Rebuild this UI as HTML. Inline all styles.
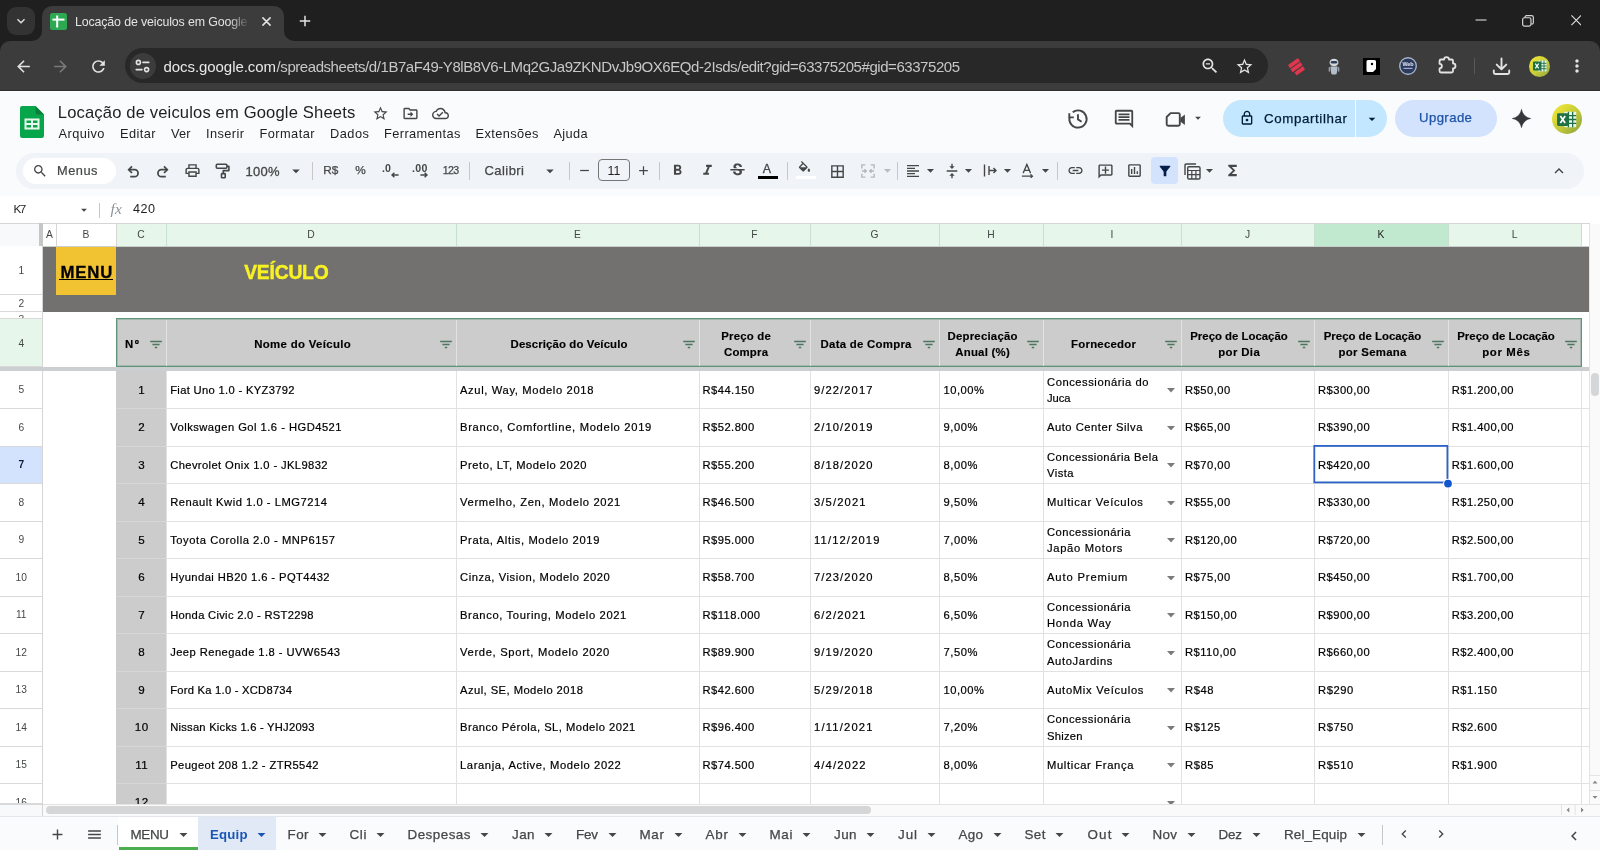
<!DOCTYPE html>
<html lang="pt-BR"><head><meta charset="utf-8"><title>Locação de veiculos em Google Sheets</title>
<style>
*{box-sizing:border-box;margin:0;padding:0}
html,body{width:1600px;height:850px;overflow:hidden;background:#fff;font-family:"Liberation Sans",sans-serif;color:#1f1f1f}
body{opacity:0.9999}
.a{position:absolute}
.t{position:absolute;white-space:nowrap;line-height:1}
</style></head><body>
<div class="a" style="left:0;top:0;width:1600px;height:91px;background:#1f1f1f"></div><div class="a" style="left:0;top:41px;width:1600px;height:49px;background:#3c3c3c;border-radius:10px 10px 0 0"></div><div class="a" style="left:0;top:89.6px;width:1600px;height:1.4px;background:#2c2c2c"></div><div class="a" style="left:0;top:91px;width:1600px;height:1.2px;background:#fff"></div><div class="a" style="left:7px;top:7px;width:28px;height:28px;border-radius:9px;background:#333"></div><svg class="a" style="left:13px;top:13px" width="16" height="16" viewBox="0 0 24 24" fill="#e3e3e3"><path d="M16.59 8.59L12 13.17 7.41 8.59 6 10l6 6 6-6z"/></svg><div class="a" style="left:42px;top:6px;width:242px;height:36px;background:#3c3c3c;border-radius:10px 10px 0 0"></div><svg class="a" style="left:32px;top:31px" width="10" height="10"><path d="M10 0V10H0A10 10 0 0 0 10 0Z" fill="#3c3c3c"/></svg><svg class="a" style="left:284px;top:31px" width="10" height="10"><path d="M0 0V10H10A10 10 0 0 1 0 0Z" fill="#3c3c3c"/></svg><svg class="a" style="left:50px;top:13px" width="17" height="17" viewBox="0 0 17 17"><rect width="17" height="17" rx="2.5" fill="#2da853"/><rect x="6.2" y="2.5" width="2" height="12" fill="#fff"/><rect x="2.5" y="5.6" width="12" height="2" fill="#fff"/></svg><div class="t" style="top:14px;line-height:16px;font-size:12.4px;color:#e3e3e3;letter-spacing:-0.140px;left:75px;width:175px;height:16px;overflow:hidden;-webkit-mask-image:linear-gradient(90deg,#000 88%,transparent);">Locação de veiculos em Google Sheets</div><svg class="a" style="left:261.5px;top:16.5px" width="9" height="9" viewBox="0 0 9 9" stroke="#e3e3e3" stroke-width="1.55" stroke-linecap="round"><path d="M0.9 0.9L8.1 8.1M8.1 0.9L0.9 8.1"/></svg><svg class="a" style="left:296px;top:12px" width="18" height="18" viewBox="0 0 24 24" fill="#e3e3e3"><path d="M19 13h-6v6h-2v-6H5v-2h6V5h2v6h6v2z"/></svg><svg class="a" style="left:1474px;top:17px" width="14" height="6"><rect x="1.5" y="2.4" width="11" height="1.2" fill="#c8c8c8"/></svg><svg class="a" style="left:1522px;top:14.8px" width="12" height="12" viewBox="0 0 13 13" fill="none" stroke="#d4d4d4" stroke-width="1.3"><rect x="0.7" y="3" width="9" height="9" rx="2"/><path d="M3.2 3V2.5Q3.2 0.7 5 0.7H10.3Q12.3 0.7 12.3 2.7V8Q12.3 9.8 10.5 9.8H10"/></svg><svg class="a" style="left:1570.8px;top:15.3px" width="10.5" height="10.5" viewBox="0 0 12 12" stroke="#dcdcdc" stroke-width="1.35"><path d="M0.5 0.5L11.5 11.5M11.5 0.5L0.5 11.5"/></svg><svg class="a" style="left:13.5px;top:56.5px" width="19" height="19" viewBox="0 0 24 24" fill="#e3e3e3"><path d="M20 11H7.83l5.59-5.59L12 4l-8 8 8 8 1.41-1.41L7.83 13H20v-2z"/></svg><svg class="a" style="left:50.5px;top:56.5px" width="19" height="19" viewBox="0 0 24 24" fill="#7a7a7a"><path d="M12 4l-1.41 1.41L16.17 11H4v2h12.17l-5.58 5.59L12 20l8-8z"/></svg><svg class="a" style="left:88.5px;top:56.5px" width="19" height="19" viewBox="0 0 24 24" fill="#e3e3e3"><path d="M17.65 6.35C16.2 4.9 14.21 4 12 4c-4.42 0-7.99 3.58-7.99 8s3.57 8 7.99 8c3.73 0 6.84-2.55 7.73-6h-2.08c-.82 2.33-3.04 4-5.65 4-3.31 0-6-2.69-6-6s2.69-6 6-6c1.66 0 3.14.69 4.22 1.78L13 11h7V4l-2.35 2.35z"/></svg><div class="a" style="left:125px;top:48px;width:1143px;height:35px;border-radius:18px;background:#282828"></div><div class="a" style="left:129.5px;top:52.7px;width:26px;height:26px;border-radius:13px;background:#3c3c3c"></div><svg class="a" style="left:135px;top:59px" width="15" height="14" viewBox="0 0 15 14" fill="none" stroke="#e3e3e3" stroke-width="1.6" stroke-linecap="round"><circle cx="3.4" cy="3.4" r="2"/><path d="M8 3.4H13.8"/><circle cx="11.6" cy="10.6" r="2"/><path d="M1.2 10.6H7"/></svg><div class="t" style="top:57px;line-height:19px;font-size:15px;color:#e8e8e8;letter-spacing:-0.064px;left:163.5px;">docs.google.com</div><div class="t" style="top:57px;line-height:19px;font-size:15px;color:#c7c7c7;letter-spacing:-0.439px;left:276.6px;">/spreadsheets/d/1B7aF49-Y8lB8V6-LMq2GJa9ZKNDvJb9OX6EQd-2Isds/edit?gid=63375205#gid=63375205</div><svg class="a" style="left:1200px;top:56px" width="20" height="20" viewBox="0 0 24 24" fill="#e3e3e3"><path d="M15.5 14h-.79l-.28-.27C15.41 12.59 16 11.11 16 9.5 16 5.91 13.09 3 9.5 3S3 5.91 3 9.5 5.91 16 9.5 16c1.61 0 3.09-.59 4.23-1.57l.27.28v.79l5 4.99L20.49 19l-4.99-5zm-6 0C7.01 14 5 11.99 5 9.5S7.01 5 9.5 5 14 7.01 14 9.5 11.99 14 9.5 14zM7 8.75h5v1.5H7z"/></svg><svg class="a" style="left:1234.5px;top:56.5px" width="19" height="19" viewBox="0 0 24 24" fill="#e3e3e3"><path d="M22 9.24l-7.19-.62L12 2 9.19 8.63 2 9.24l5.46 4.73L5.82 21 12 17.27 18.18 21l-1.63-7.03L22 9.24zM12 15.4l-3.76 2.27 1-4.28-3.32-2.88 4.38-.38L12 6.1l1.71 4.04 4.38.38-3.32 2.88 1 4.28L12 15.4z"/></svg><svg class="a" style="left:1286px;top:57px" width="20" height="19" viewBox="0 0 20 19" fill="#e0364e"><path d="M2 8L12 1l2 3.2L4 11.2zM4.5 12L14.5 5l2 3.2L6.5 15.2zM8.5 15.2L17 9.3l2 3.2L10.5 18.4z"/></svg><svg class="a" style="left:1328px;top:57.5px" width="12" height="17" viewBox="0 0 15 21"><ellipse cx="7.5" cy="5.5" rx="5.5" ry="4.8" fill="#d5d9de"/><rect x="3.5" y="3.6" width="8" height="3.2" rx="1.6" fill="#2b3e57"/><path d="M3 10.5h9l-1 8.5a2 2 0 0 1-2 1.6H6a2 2 0 0 1-2-1.6z" fill="#b4bec8"/><rect x="0.8" y="11" width="2" height="6" rx="1" fill="#8f9ba6"/><rect x="12.2" y="11" width="2" height="6" rx="1" fill="#8f9ba6"/></svg><div class="a" style="left:1362.5px;top:57.5px;width:17px;height:17px;background:#000"></div><svg class="a" style="left:1366px;top:60px" width="10" height="12" viewBox="0 0 10 12"><path d="M2 0h6.5a1.5 1.5 0 0 1 1.5 1.5V9L7 12H2a1.5 1.5 0 0 1-1.5-1.5v-9A1.5 1.5 0 0 1 2 0z" fill="#fff"/><circle cx="6" cy="4" r="1.2" fill="#000"/></svg><svg class="a" style="left:1399px;top:57px" width="18" height="18" viewBox="0 0 20 20"><circle cx="10" cy="10" r="9.2" fill="#2d3a5c" stroke="#a9b6d0" stroke-width="1.5"/><text x="10" y="10.5" text-anchor="middle" font-family="Liberation Sans,sans-serif" font-weight="bold" font-size="6" fill="#dfe8fa">Web</text><rect x="5" y="12" width="10" height="1.3" fill="#9fb3d9"/></svg><svg class="a" style="left:1437px;top:54.2px" width="20" height="20" viewBox="0 0 21 21" fill="none" stroke="#e3e3e3" stroke-width="1.9" stroke-linejoin="round"><path d="M4.2 5.8H7.4A2.6 2.6 0 0 1 12.6 5.8H15.3Q16.8 5.8 16.8 7.3V9.9A2.6 2.6 0 0 1 16.8 15.1V17.9Q16.8 19.4 15.3 19.4H4.2Q2.7 19.4 2.7 17.9V15.1A2.4 2.4 0 0 0 2.7 10.3V7.3Q2.7 5.8 4.2 5.8Z"/></svg><div class="a" style="left:1473.5px;top:58px;width:1.5px;height:16px;background:#5a5a5a"></div><svg class="a" style="left:1492px;top:57px" width="19" height="19" viewBox="0 0 19 19" fill="none" stroke="#e3e3e3" stroke-width="1.9" stroke-linecap="round" stroke-linejoin="round"><path d="M9.5 1.5V12M4.7 7.6L9.5 12.3L14.3 7.6M1.8 13.5V15.5Q1.8 17 3.3 17H15.7Q17.2 17 17.2 15.5V13.5"/></svg><div class="a" style="left:1529px;top:55.5px;width:21px;height:21px;border-radius:11px;background:linear-gradient(135deg,#e6e038 20%,#c8cc38 55%,#94aa3c 95%)"></div><svg class="a" style="left:1533px;top:60px" width="14" height="12" viewBox="0 0 14 12"><rect x="5" y="0.5" width="8.5" height="11" rx="0.8" fill="#e9f5ec"/><path d="M8 0.5V11.5M11 0.5V11.5M5 3.3H13.5M5 6H13.5M5 8.7H13.5" stroke="#1e7145" stroke-width="0.9"/><rect x="0" y="1.5" width="8" height="9" rx="0.8" fill="#1e7145"/><path d="M2.3 3.6L5.7 8.4M5.7 3.6L2.3 8.4" stroke="#fff" stroke-width="1.2"/></svg><svg class="a" style="left:1567px;top:56px" width="20" height="20" viewBox="0 0 24 24" fill="#e3e3e3"><path d="M12 8c1.1 0 2-.9 2-2s-.9-2-2-2-2 .9-2 2 .9 2 2 2zm0 2c-1.1 0-2 .9-2 2s.9 2 2 2 2-.9 2-2-.9-2-2-2zm0 6c-1.1 0-2 .9-2 2s.9 2 2 2 2-.9 2-2-.9-2-2-2z"/></svg><div class="a" style="left:0;top:92px;width:1600px;height:104.5px;background:#f9fbfd"></div><svg class="a" style="left:20px;top:106px" width="24" height="32" viewBox="0 0 24 32"><path d="M2.2 0H15.5L24 8.5V29.8A2.2 2.2 0 0 1 21.8 32H2.2A2.2 2.2 0 0 1 0 29.8V2.2A2.2 2.2 0 0 1 2.2 0Z" fill="#08a64b"/><path d="M15.5 0L24 8.5H17.7A2.2 2.2 0 0 1 15.5 6.3Z" fill="#0a7f3c"/><path d="M4.5 12.6V23.6H19.5V12.6ZM11 21.6H6.5V19.1H11ZM11 17.1H6.5V14.6H11ZM17.5 21.6H13V19.1H17.5ZM17.5 17.1H13V14.6H17.5Z" fill="#eaf6ee"/></svg><div class="t" style="top:102px;line-height:21px;font-size:16.6px;color:#1f1f1f;letter-spacing:0.142px;left:57.8px;">Locação de veiculos em Google Sheets</div><svg class="a" style="left:371.5px;top:104.5px" width="17" height="17" viewBox="0 0 24 24" fill="#444746"><path d="M22 9.24l-7.19-.62L12 2 9.19 8.63 2 9.24l5.46 4.73L5.82 21 12 17.27 18.18 21l-1.63-7.03L22 9.24zM12 15.4l-3.76 2.27 1-4.28-3.32-2.88 4.38-.38L12 6.1l1.71 4.04 4.38.38-3.32 2.88 1 4.28L12 15.4z"/></svg><svg class="a" style="left:401.5px;top:104.5px" width="17" height="17" viewBox="0 0 24 24" fill="#444746"><path d="M20 6h-8l-2-2H4c-1.1 0-2 .9-2 2v12c0 1.1.9 2 2 2h16c1.1 0 2-.9 2-2V8c0-1.1-.9-2-2-2zm0 12H4V6h5.17l2 2H20v10zm-8-1l4-4-4-4v3H8v2h4z"/></svg><svg class="a" style="left:431.5px;top:104.5px" width="17" height="17" viewBox="0 0 24 24" fill="#444746"><path d="M19.35 10.04C18.67 6.59 15.64 4 12 4 9.11 4 6.6 5.64 5.35 8.04 2.34 8.36 0 10.91 0 14c0 3.31 2.69 6 6 6h13c2.76 0 5-2.24 5-5 0-2.64-2.05-4.78-4.65-4.96zM19 18H6c-2.21 0-4-1.79-4-4 0-2.05 1.53-3.76 3.56-3.97l1.07-.11.5-.95C8.08 7.14 9.94 6 12 6c2.62 0 4.88 1.86 5.39 4.43l.3 1.5 1.53.11c1.56.1 2.78 1.41 2.78 2.96 0 1.65-1.35 3-3 3zm-9-3.82l-2.09-2.09L6.5 13.5 10 17l6.01-6.01-1.41-1.41z"/></svg><div class="t" style="top:125px;line-height:17px;font-size:12.8px;color:#1f1f1f;letter-spacing:0.433px;left:58.5px;">Arquivo</div><div class="t" style="top:125px;line-height:17px;font-size:12.8px;color:#1f1f1f;letter-spacing:0.412px;left:120px;">Editar</div><div class="t" style="top:125px;line-height:17px;font-size:12.8px;color:#1f1f1f;letter-spacing:0.144px;left:171px;">Ver</div><div class="t" style="top:125px;line-height:17px;font-size:12.8px;color:#1f1f1f;letter-spacing:0.406px;left:206px;">Inserir</div><div class="t" style="top:125px;line-height:17px;font-size:12.8px;color:#1f1f1f;letter-spacing:0.440px;left:259.5px;">Formatar</div><div class="t" style="top:125px;line-height:17px;font-size:12.8px;color:#1f1f1f;letter-spacing:0.500px;left:330px;">Dados</div><div class="t" style="top:125px;line-height:17px;font-size:12.8px;color:#1f1f1f;letter-spacing:0.394px;left:384px;">Ferramentas</div><div class="t" style="top:125px;line-height:17px;font-size:12.8px;color:#1f1f1f;letter-spacing:0.404px;left:475.5px;">Extensões</div><div class="t" style="top:125px;line-height:17px;font-size:12.8px;color:#1f1f1f;letter-spacing:0.316px;left:553.5px;">Ajuda</div><svg class="a" style="left:1065.8px;top:107px" width="24" height="24" viewBox="0 0 24 24" fill="none" stroke="#444746" stroke-width="1.9"><path d="M3.56 10.36A8.6 8.6 0 1 0 6.71 5.22"/><path d="M3.3 6.3V10.4H7.8"/><path d="M12 7.2V12.4L15.6 14.7"/></svg><svg class="a" style="left:1113px;top:108.3px" width="22" height="22" viewBox="0 0 24 24" fill="#444746"><path d="M21.99 4c0-1.1-.89-2-1.99-2H4c-1.1 0-2 .9-2 2v12c0 1.1.9 2 2 2h14l4 4-.01-18zM20 4v13.17L18.83 16H4V4h16zM6 12h12v2H6zm0-3h12v2H6zm0-3h12v2H6z"/></svg><svg class="a" style="left:1160px;top:106px" width="30" height="26" viewBox="1160 106 30 26"><path d="M1170.6 113.1H1178.3Q1179.8 113.1 1179.8 114.6V124.3Q1179.8 125.8 1178.3 125.8H1168.2Q1166.7 125.8 1166.7 124.3V117Z" fill="none" stroke="#444746" stroke-width="1.9" stroke-linejoin="round"/><path d="M1180.3 118L1184.9 114.4V125L1180.3 121.4Z" fill="#444746"/></svg><svg class="a" style="left:1191px;top:111px" width="14" height="14" viewBox="0 0 24 24" fill="#444746"><path d="M7 10l5 5 5-5z"/></svg><div class="a" style="left:1223px;top:100px;width:164px;height:36.5px;border-radius:18.5px;background:#c2e7ff"></div><div class="a" style="left:1354.5px;top:100px;width:1px;height:36.5px;background:#f9fbfd"></div><svg class="a" style="left:1239px;top:110px" width="16" height="16" viewBox="0 0 24 24" fill="#001d35"><path d="M18 8h-1V6c0-2.76-2.24-5-5-5S7 3.24 7 6v2H6c-1.1 0-2 .9-2 2v10c0 1.1.9 2 2 2h12c1.1 0 2-.9 2-2V10c0-1.1-.9-2-2-2zM9 6c0-1.66 1.34-3 3-3s3 1.34 3 3v2H9V6zm9 14H6V10h12v10zm-6-3c1.1 0 2-.9 2-2s-.9-2-2-2-2 .9-2 2 .9 2 2 2z"/></svg><div class="t" style="top:110px;line-height:17px;font-size:13.3px;color:#001d35;letter-spacing:0.624px;left:1264px;-webkit-text-stroke:0.25px #001d35;">Compartilhar</div><svg class="a" style="left:1363.5px;top:110.5px" width="16" height="16" viewBox="0 0 24 24" fill="#001d35"><path d="M7 10l5 5 5-5z"/></svg><div class="a" style="left:1395px;top:100px;width:102px;height:36.5px;border-radius:18.5px;background:#d3e3fd"></div><div class="t" style="top:109px;line-height:17px;font-size:13.2px;color:#1f54a8;letter-spacing:0.394px;left:1419px;-webkit-text-stroke:0.25px #1f54a8;">Upgrade</div><svg class="a" style="left:1511.5px;top:109px" width="19" height="19" viewBox="0 0 22 22"><path d="M11 0.5C12 6 16 10 21.5 11C16 12 12 16 11 21.5C10 16 6 12 0.5 11C6 10 10 6 11 0.5Z" fill="#35383b" stroke="#35383b" stroke-width="0.8" stroke-linejoin="round"/></svg><div class="a" style="left:1552px;top:104px;width:30px;height:30px;border-radius:15px;background:linear-gradient(135deg,#e6e038 20%,#c2c838 55%,#8ea53c 95%)"></div><svg class="a" style="left:1557px;top:110.5px" width="20" height="17" viewBox="0 0 14 12"><rect x="5" y="0.5" width="8.5" height="11" rx="0.8" fill="#e9f5ec"/><path d="M8 0.5V11.5M11 0.5V11.5M5 3.3H13.5M5 6H13.5M5 8.7H13.5" stroke="#1e7145" stroke-width="0.9"/><rect x="0" y="1.5" width="8" height="9" rx="0.8" fill="#1e7145"/><path d="M2.3 3.6L5.7 8.4M5.7 3.6L2.3 8.4" stroke="#fff" stroke-width="1.2"/></svg><div class="a" style="left:16px;top:152.5px;width:1568px;height:36px;border-radius:18px;background:#f0f4f9"></div><div class="a" style="left:23px;top:157.5px;width:93px;height:26px;border-radius:13px;background:#fff"></div><svg class="a" style="left:32px;top:162.5px" width="16" height="16" viewBox="0 0 24 24" fill="#444746"><path d="M15.5 14h-.79l-.28-.27C15.41 12.59 16 11.11 16 9.5 16 5.91 13.09 3 9.5 3S3 5.91 3 9.5 5.91 16 9.5 16c1.61 0 3.09-.59 4.23-1.57l.27.28v.79l5 4.99L20.49 19l-4.99-5zm-6 0C7.01 14 5 11.99 5 9.5S7.01 5 9.5 5 14 7.01 14 9.5 11.99 14 9.5 14z"/></svg><div class="t" style="top:162px;line-height:17px;font-size:12.8px;color:#444746;letter-spacing:0.520px;left:57px;-webkit-text-stroke:0.2px #444746;">Menus</div><svg class="a" style="left:120px;top:160px" width="60" height="22" viewBox="120 160 60 22" fill="none" stroke="#444746" stroke-width="1.75"><path d="M128.9 169.7H134.6A3.45 3.45 0 0 1 134.6 176.6H130.2"/><path d="M132 166.4L128.7 169.7L132 173"/><path d="M167.1 169.7H161.4A3.45 3.45 0 0 0 161.4 176.6H165.8"/><path d="M164 166.4L167.3 169.7L164 173"/></svg><svg class="a" style="left:183.5px;top:162px" width="17" height="17" viewBox="0 0 24 24" fill="#444746"><path d="M19 8h-1V3H6v5H5c-1.66 0-3 1.34-3 3v6h4v4h12v-4h4v-6c0-1.66-1.34-3-3-3zM8 5h8v3H8V5zm8 12v2H8v-4h8v2zm2-2v-2H6v2H4v-4c0-.55.45-1 1-1h14c.55 0 1 .45 1 1v4h-2z"/></svg><svg class="a" style="left:212px;top:160px" width="22" height="22" viewBox="212 160 22 22" fill="none" stroke="#444746" stroke-width="1.6" stroke-linejoin="round"><rect x="216.3" y="164.3" width="10.6" height="3.9" rx="1"/><path d="M226.9 166.2H228.9V170.6H223.3V173.6"/><rect x="221.5" y="173.6" width="3.7" height="4.2" rx="0.6"/></svg><div class="t" style="top:163px;line-height:17px;font-size:13px;color:#444746;letter-spacing:0.250px;left:245.5px;-webkit-text-stroke:0.3px #444746;">100%</div><svg class="a" style="left:287px;top:161.5px" width="18" height="18" viewBox="0 0 24 24" fill="#444746"><path d="M7 10l5 5 5-5z"/></svg><div class="a" style="left:312px;top:161.5px;width:1px;height:18px;background:#c7c7c7"></div><div class="t" style="top:162px;line-height:16px;font-size:11.8px;color:#444746;letter-spacing:-0.084px;left:323.3px;-webkit-text-stroke:0.25px #444746;">R$</div><div class="t" style="top:162px;line-height:16px;font-size:11.8px;color:#444746;left:355.3px;-webkit-text-stroke:0.25px #444746;">%</div><div class="t" style="top:161px;line-height:14px;font-size:10.6px;color:#444746;font-weight:bold;letter-spacing:0.160px;left:382px;">.0</div><svg class="a" style="left:390.5px;top:172.3px" width="8" height="6" viewBox="0 0 8 6" fill="none" stroke="#444746" stroke-width="1.4"><path d="M7.6 3H1.2M3.4 0.7L1 3L3.4 5.3"/></svg><div class="t" style="top:161px;line-height:14px;font-size:10.6px;color:#444746;font-weight:bold;letter-spacing:0.382px;left:412px;">.00</div><svg class="a" style="left:419.5px;top:172.3px" width="8" height="6" viewBox="0 0 8 6" fill="none" stroke="#444746" stroke-width="1.4"><path d="M0.4 3H6.8M4.6 0.7L7 3L4.6 5.3"/></svg><div class="t" style="top:163px;line-height:14px;font-size:10.6px;color:#444746;letter-spacing:-0.693px;left:442.8px;-webkit-text-stroke:0.25px #444746;">123</div><div class="a" style="left:469px;top:161.5px;width:1px;height:18px;background:#c7c7c7"></div><div class="t" style="top:162px;line-height:17px;font-size:13px;color:#444746;letter-spacing:0.443px;left:484.5px;-webkit-text-stroke:0.25px #444746;">Calibri</div><svg class="a" style="left:541px;top:161.5px" width="18" height="18" viewBox="0 0 24 24" fill="#444746"><path d="M7 10l5 5 5-5z"/></svg><div class="a" style="left:568.5px;top:161.5px;width:1px;height:18px;background:#c7c7c7"></div><svg class="a" style="left:576.5px;top:163px" width="15" height="15" viewBox="0 0 24 24" fill="#444746"><path d="M19 13H5v-2h14v2z"/></svg><div class="a" style="left:598px;top:159.2px;width:32px;height:22px;border-radius:4px;border:1px solid #747775;background:#f0f4f9"></div><div class="t" style="left:598px;width:32px;text-align:center;top:164.5px;font-size:12.4px;color:#1f1f1f">11</div><svg class="a" style="left:635.5px;top:163px" width="15" height="15" viewBox="0 0 24 24" fill="#444746"><path d="M19 13h-6v6h-2v-6H5v-2h6V5h2v6h6v2z"/></svg><div class="a" style="left:659px;top:161.5px;width:1px;height:18px;background:#c7c7c7"></div><svg class="a" style="left:668.5px;top:162px" width="17" height="17" viewBox="0 0 24 24" fill="#444746"><path d="M15.6 10.79c.97-.67 1.65-1.77 1.65-2.79 0-2.26-1.75-4-4-4H7v14h7.04c2.09 0 3.71-1.7 3.71-3.79 0-1.52-.86-2.82-2.15-3.42zM10 6.5h3c.83 0 1.5.67 1.5 1.5s-.67 1.5-1.5 1.5h-3v-3zm3.5 9H10v-3h3.5c.83 0 1.5.67 1.5 1.5s-.67 1.5-1.5 1.5z"/></svg><svg class="a" style="left:698.5px;top:162px" width="17" height="17" viewBox="0 0 24 24" fill="#444746"><path d="M10 4v3h2.21l-3.42 8H6v3h8v-3h-2.21l3.42-8H18V4z"/></svg><svg class="a" style="left:727.5px;top:161px" width="19" height="19" viewBox="0 0 24 24" fill="#444746"><path d="M7.24 8.75c-.26-.48-.39-1.03-.39-1.67 0-.61.13-1.16.4-1.67.26-.5.63-.93 1.11-1.29.48-.35 1.05-.63 1.7-.83.66-.19 1.39-.29 2.18-.29.81 0 1.54.11 2.21.34.66.22 1.23.54 1.69.94.47.4.83.88 1.08 1.43.25.55.38 1.15.38 1.81h-3.01c0-.31-.05-.59-.15-.85-.09-.27-.24-.49-.44-.68-.2-.19-.45-.33-.75-.44-.3-.1-.66-.16-1.06-.16-.39 0-.74.04-1.03.13-.29.09-.53.21-.72.36-.19.16-.34.34-.44.55-.1.21-.15.43-.15.66 0 .48.25.88.74 1.21.38.25.77.48 1.41.7H7.39c-.05-.08-.11-.17-.15-.25zM21 12v-2H3v2h9.62c.18.07.4.14.55.2.37.17.66.34.87.51.21.17.35.36.43.57.07.2.11.43.11.69 0 .23-.05.45-.14.66-.09.2-.23.38-.42.53-.19.15-.42.26-.71.35-.29.08-.63.13-1.01.13-.43 0-.83-.04-1.18-.13s-.66-.23-.91-.42c-.25-.19-.45-.44-.59-.75-.14-.31-.25-.76-.25-1.21H6.4c0 .55.08 1.13.24 1.58.16.45.37.85.65 1.21.28.35.6.66.98.92.37.26.78.48 1.22.65.44.17.9.3 1.38.39.48.08.96.13 1.44.13.8 0 1.53-.09 2.18-.28s1.21-.45 1.67-.79c.46-.34.82-.77 1.07-1.27s.38-1.07.38-1.71c0-.6-.1-1.14-.31-1.61-.05-.11-.11-.23-.17-.33H21z"/></svg><div class="t" style="left:761px;width:12px;text-align:center;top:162.5px;font-size:12.4px;color:#444746;-webkit-text-stroke:0.3px #444746">A</div><div class="a" style="left:757.5px;top:175.5px;width:20px;height:3.2px;background:#000"></div><div class="a" style="left:787px;top:161.5px;width:1px;height:18px;background:#c7c7c7"></div><svg class="a" style="left:796.5px;top:160.5px" width="15" height="15" viewBox="0 0 24 24" fill="#444746"><path d="M16.56 8.94L7.62 0 6.21 1.41l2.38 2.38-5.15 5.15c-.59.59-.59 1.54 0 2.12l5.5 5.5c.29.29.68.44 1.06.44s.77-.15 1.06-.44l5.5-5.5c.59-.58.59-1.53 0-2.12zM5.21 10L10 5.21 14.79 10H5.21zM19 11.5s-2 2.17-2 3.5c0 1.1.9 2 2 2s2-.9 2-2c0-1.33-2-3.5-2-3.5z"/></svg><div class="a" style="left:795.5px;top:175.5px;width:20px;height:3.2px;background:#fff"></div><svg class="a" style="left:828.5px;top:162.5px" width="17" height="17" viewBox="0 0 24 24" fill="#444746"><path d="M3 3v18h18V3H3zm8 16H5v-6h6v6zm0-8H5V5h6v6zm8 8h-6v-6h6v6zm0-8h-6V5h6v6z"/></svg><svg class="a" style="left:861px;top:163.7px" width="14" height="14" viewBox="0 0 16 16" fill="none" stroke="#b4b7ba" stroke-width="1.6"><path d="M5 1H1V5M11 1H15V5M5 15H1V11M11 15H15V11"/><path d="M1 8H6M4 6L6 8L4 10M15 8H10M12 6L10 8L12 10"/></svg><svg class="a" style="left:879px;top:162px" width="17" height="17" viewBox="0 0 24 24" fill="#b9bcbf"><path d="M7 10l5 5 5-5z"/></svg><div class="a" style="left:897px;top:161.5px;width:1px;height:18px;background:#c7c7c7"></div><svg class="a" style="left:905px;top:162.5px" width="16" height="16" viewBox="0 0 24 24" fill="#444746"><path d="M15 15H3v2h12v-2zm0-8H3v2h12V7zM3 13h18v-2H3v2zm0 8h18v-2H3v2zM3 3v2h18V3H3z"/></svg><svg class="a" style="left:921.5px;top:162px" width="17" height="17" viewBox="0 0 24 24" fill="#444746"><path d="M7 10l5 5 5-5z"/></svg><svg class="a" style="left:944px;top:162.5px" width="16" height="16" viewBox="0 0 24 24" fill="#444746"><path d="M8 19h3v4h2v-4h3l-4-4-4 4zm8-14h-3V1h-2v4H8l4 4 4-4zM4 11v2h16v-2H4z"/></svg><svg class="a" style="left:959.5px;top:162px" width="17" height="17" viewBox="0 0 24 24" fill="#444746"><path d="M7 10l5 5 5-5z"/></svg><svg class="a" style="left:983px;top:163px" width="15" height="15" viewBox="0 0 15 15" fill="none" stroke="#444746" stroke-width="1.4"><path d="M1.5 1.5V13.5M6 3V12M6 7.5H13M10.5 5L13 7.5L10.5 10"/></svg><svg class="a" style="left:998.5px;top:162px" width="17" height="17" viewBox="0 0 24 24" fill="#444746"><path d="M7 10l5 5 5-5z"/></svg><svg class="a" style="left:1021px;top:163px" width="14" height="15" viewBox="0 0 16 17" fill="none" stroke="#444746" stroke-width="1.5"><path d="M2.5 11.5L6.7 1.5L10.9 11.5M4 8.3H9.4"/><path d="M1 15H13M10.8 12.8L13.2 15L10.8 17.2" stroke-width="1.3"/></svg><svg class="a" style="left:1036.5px;top:162px" width="17" height="17" viewBox="0 0 24 24" fill="#444746"><path d="M7 10l5 5 5-5z"/></svg><div class="a" style="left:1057px;top:161.5px;width:1px;height:18px;background:#c7c7c7"></div><svg class="a" style="left:1066.5px;top:162px" width="17" height="17" viewBox="0 0 24 24" fill="#444746"><path d="M3.9 12c0-1.71 1.39-3.1 3.1-3.1h4V7H7c-2.76 0-5 2.24-5 5s2.24 5 5 5h4v-1.9H7c-1.71 0-3.1-1.39-3.1-3.1zM8 13h8v-2H8v2zm9-6h-4v1.9h4c1.71 0 3.1 1.39 3.1 3.1s-1.39 3.1-3.1 3.1h-4V17h4c2.76 0 5-2.24 5-5s-2.24-5-5-5z"/></svg><svg class="a" style="left:1096.5px;top:162.5px" width="17" height="17" viewBox="0 0 24 24" fill="#444746"><g transform="translate(24,0) scale(-1,1)"><path d="M22 4c0-1.1-.9-2-2-2H4c-1.1 0-2 .9-2 2v12c0 1.1.9 2 2 2h14l4 4V4zM20 17.17L18.83 16H4V4h16v13.17zM11 5h2v4h4v2h-4v4h-2v-4H7V9h4z"/></g></svg><svg class="a" style="left:1126px;top:162px" width="17" height="17" viewBox="0 0 24 24" fill="#444746"><path d="M9 17H7v-7h2v7zm4 0h-2V7h2v10zm4 0h-2v-4h2v4zm2 2H5V5h14v14zm0-16H5c-1.1 0-2 .9-2 2v14c0 1.1.9 2 2 2h14c1.1 0 2-.9 2-2V5c0-1.1-.9-2-2-2z"/></svg><div class="a" style="left:1151px;top:157px;width:27px;height:27px;border-radius:4px;background:#d3e3fd"></div><svg class="a" style="left:1156.5px;top:162.5px" width="16" height="16" viewBox="0 0 24 24" fill="#041e49"><path d="M4.25 5.61C6.27 8.2 10 13 10 13v6c0 .55.45 1 1 1h2c.55 0 1-.45 1-1v-6s3.72-4.8 5.74-7.39c.51-.66.04-1.61-.79-1.61H5.04c-.83 0-1.3.95-.79 1.61z"/></svg><svg class="a" style="left:1183.5px;top:162.5px" width="17" height="17" viewBox="0 0 17 17" fill="none" stroke="#444746" stroke-width="1.4"><path d="M1 12V2.2Q1 1 2.2 1H12"/><rect x="3.7" y="3.7" width="12.3" height="12.3" rx="1.2"/><path d="M3.7 7.5H16M3.7 11.7H16M7.8 7.5V16M11.9 7.5V16" stroke-width="1.2"/></svg><svg class="a" style="left:1200.5px;top:162px" width="17" height="17" viewBox="0 0 24 24" fill="#444746"><path d="M7 10l5 5 5-5z"/></svg><svg class="a" style="left:1224px;top:162px" width="17" height="17" viewBox="0 0 24 24" fill="#444746"><path d="M18 4H6v2l6.5 6L6 18v2h12v-3h-7l5-5-5-5h7z"/></svg><svg class="a" style="left:1550px;top:161.5px" width="18" height="18" viewBox="0 0 24 24" fill="#444746"><path d="M12 8l-6 6 1.41 1.41L12 10.83l4.59 4.59L18 14z"/></svg><div class="a" style="left:0;top:196px;width:1600px;height:28px;background:#fff"></div><div class="t" style="top:201px;line-height:15px;font-size:11.7px;color:#1f1f1f;letter-spacing:-1.511px;left:13.5px;">K7</div><svg class="a" style="left:77px;top:202.5px" width="14" height="14" viewBox="0 0 24 24" fill="#444746"><path d="M7 10l5 5 5-5z"/></svg><div class="a" style="left:99px;top:202.5px;width:1px;height:15px;background:#c7c7c7"></div><div class="t" style="left:110.5px;top:200px;line-height:18px;font-size:15.5px;color:#8e9399;font-family:'Liberation Serif',serif;font-style:italic;letter-spacing:0.3px">fx</div><div class="t" style="top:201px;line-height:16px;font-size:12.6px;color:#1f1f1f;letter-spacing:0.489px;left:133px;">420</div><div class="a" style="left:0;top:223px;width:1590px;height:23px;background:#fff;border-top:1px solid #d5d5d5"></div><div class="a" style="left:0;top:223px;width:43px;height:23px;background:#f8f9fa;border-top:1px solid #d5d5d5"></div><div class="a" style="left:39.3px;top:223px;width:3.8px;height:23px;background:#c4c7c5"></div><div class="a" style="left:43.6px;top:224px;width:13px;height:22px;background:#fff;border-right:1px solid #d5d5d5"></div><div class="t" style="top:228px;line-height:13px;font-size:10.3px;color:#444746;left:43px;width:13px;text-align:center;">A</div><div class="a" style="left:56.6px;top:224px;width:60px;height:22px;background:#fff;border-right:1px solid #d5d5d5"></div><div class="t" style="top:228px;line-height:13px;font-size:10.3px;color:#444746;left:56px;width:60px;text-align:center;">B</div><div class="a" style="left:116.6px;top:224px;width:50px;height:22px;background:#e6f6ea;border-right:1px solid #c9dfd0"></div><div class="t" style="top:228px;line-height:13px;font-size:10.3px;color:#444746;left:116px;width:50px;text-align:center;">C</div><div class="a" style="left:166.6px;top:224px;width:290px;height:22px;background:#e6f6ea;border-right:1px solid #c9dfd0"></div><div class="t" style="top:228px;line-height:13px;font-size:10.3px;color:#444746;left:166px;width:290px;text-align:center;">D</div><div class="a" style="left:456.6px;top:224px;width:243px;height:22px;background:#e6f6ea;border-right:1px solid #c9dfd0"></div><div class="t" style="top:228px;line-height:13px;font-size:10.3px;color:#444746;left:456px;width:243px;text-align:center;">E</div><div class="a" style="left:699.6px;top:224px;width:111px;height:22px;background:#e6f6ea;border-right:1px solid #c9dfd0"></div><div class="t" style="top:228px;line-height:13px;font-size:10.3px;color:#444746;left:699px;width:111px;text-align:center;">F</div><div class="a" style="left:810.6px;top:224px;width:129px;height:22px;background:#e6f6ea;border-right:1px solid #c9dfd0"></div><div class="t" style="top:228px;line-height:13px;font-size:10.3px;color:#444746;left:810px;width:129px;text-align:center;">G</div><div class="a" style="left:939.6px;top:224px;width:104px;height:22px;background:#e6f6ea;border-right:1px solid #c9dfd0"></div><div class="t" style="top:228px;line-height:13px;font-size:10.3px;color:#444746;left:939px;width:104px;text-align:center;">H</div><div class="a" style="left:1043.6px;top:224px;width:138px;height:22px;background:#e6f6ea;border-right:1px solid #c9dfd0"></div><div class="t" style="top:228px;line-height:13px;font-size:10.3px;color:#444746;left:1043px;width:138px;text-align:center;">I</div><div class="a" style="left:1181.6px;top:224px;width:133px;height:22px;background:#e6f6ea;border-right:1px solid #c9dfd0"></div><div class="t" style="top:228px;line-height:13px;font-size:10.3px;color:#444746;left:1181px;width:133px;text-align:center;">J</div><div class="a" style="left:1314.6px;top:224px;width:134px;height:22px;background:#c1e9cf;border-right:1px solid #c9dfd0"></div><div class="t" style="top:228px;line-height:13px;font-size:10.3px;color:#1f1f1f;left:1314px;width:134px;text-align:center;">K</div><div class="a" style="left:1448.6px;top:224px;width:133px;height:22px;background:#e6f6ea;border-right:1px solid #c9dfd0"></div><div class="t" style="top:228px;line-height:13px;font-size:10.3px;color:#444746;left:1448px;width:133px;text-align:center;">L</div><div class="a" style="left:0;top:246px;width:43px;height:558px;background:#fff;border-right:1px solid #d5d5d5"></div><div class="a" style="left:0;top:246px;width:42px;height:49px;background:#fff;border-bottom:1px solid #d9d9d9;overflow:hidden"><div class="t" style="top:18px;line-height:13px;font-size:10.2px;color:#444746;left:0px;width:42.5px;text-align:center;">1</div></div><div class="a" style="left:0;top:295px;width:42px;height:17px;background:#fff;border-bottom:1px solid #d9d9d9;overflow:hidden"><div class="t" style="top:2px;line-height:13px;font-size:10.2px;color:#444746;left:0px;width:42.5px;text-align:center;">2</div></div><div class="a" style="left:0;top:312px;width:42px;height:7px;background:#fff;border-bottom:1px solid #d9d9d9;overflow:hidden"><div class="t" style="top:1px;line-height:13px;font-size:10.2px;color:#444746;left:0px;width:42.5px;text-align:center;">3</div></div><div class="a" style="left:0;top:319px;width:42px;height:48px;background:#e6f6ea;border-bottom:1px solid #d9d9d9;overflow:hidden"><div class="t" style="top:18px;line-height:13px;font-size:10.2px;color:#444746;left:0px;width:42.5px;text-align:center;">4</div></div><div class="a" style="left:0;top:372px;width:42px;height:37px;background:#fff;border-bottom:1px solid #d9d9d9;overflow:hidden"><div class="t" style="top:11px;line-height:13px;font-size:10.2px;color:#444746;left:0px;width:42.5px;text-align:center;">5</div></div><div class="a" style="left:0;top:409px;width:42px;height:38px;background:#fff;border-bottom:1px solid #d9d9d9;overflow:hidden"><div class="t" style="top:12px;line-height:13px;font-size:10.2px;color:#444746;left:0px;width:42.5px;text-align:center;">6</div></div><div class="a" style="left:0;top:447px;width:42px;height:37px;background:#d3e3fd;border-bottom:1px solid #d9d9d9;overflow:hidden"><div class="t" style="top:11px;line-height:13px;font-size:10.2px;color:#0b1e40;font-weight:bold;left:0px;width:42.5px;text-align:center;">7</div></div><div class="a" style="left:0;top:484px;width:42px;height:38px;background:#fff;border-bottom:1px solid #d9d9d9;overflow:hidden"><div class="t" style="top:12px;line-height:13px;font-size:10.2px;color:#444746;left:0px;width:42.5px;text-align:center;">8</div></div><div class="a" style="left:0;top:522px;width:42px;height:37px;background:#fff;border-bottom:1px solid #d9d9d9;overflow:hidden"><div class="t" style="top:11px;line-height:13px;font-size:10.2px;color:#444746;left:0px;width:42.5px;text-align:center;">9</div></div><div class="a" style="left:0;top:559px;width:42px;height:38px;background:#fff;border-bottom:1px solid #d9d9d9;overflow:hidden"><div class="t" style="top:12px;line-height:13px;font-size:10.2px;color:#444746;left:0px;width:42.5px;text-align:center;">10</div></div><div class="a" style="left:0;top:597px;width:42px;height:37px;background:#fff;border-bottom:1px solid #d9d9d9;overflow:hidden"><div class="t" style="top:11px;line-height:13px;font-size:10.2px;color:#444746;left:0px;width:42.5px;text-align:center;">11</div></div><div class="a" style="left:0;top:634px;width:42px;height:38px;background:#fff;border-bottom:1px solid #d9d9d9;overflow:hidden"><div class="t" style="top:12px;line-height:13px;font-size:10.2px;color:#444746;left:0px;width:42.5px;text-align:center;">12</div></div><div class="a" style="left:0;top:672px;width:42px;height:37px;background:#fff;border-bottom:1px solid #d9d9d9;overflow:hidden"><div class="t" style="top:11px;line-height:13px;font-size:10.2px;color:#444746;left:0px;width:42.5px;text-align:center;">13</div></div><div class="a" style="left:0;top:709px;width:42px;height:38px;background:#fff;border-bottom:1px solid #d9d9d9;overflow:hidden"><div class="t" style="top:12px;line-height:13px;font-size:10.2px;color:#444746;left:0px;width:42.5px;text-align:center;">14</div></div><div class="a" style="left:0;top:747px;width:42px;height:37px;background:#fff;border-bottom:1px solid #d9d9d9;overflow:hidden"><div class="t" style="top:11px;line-height:13px;font-size:10.2px;color:#444746;left:0px;width:42.5px;text-align:center;">15</div></div><div class="a" style="left:0;top:784px;width:42px;height:20px;background:#fff;border-bottom:1px solid #d9d9d9;overflow:hidden"><div class="t" style="top:12px;line-height:13px;font-size:10.2px;color:#444746;left:0px;width:42.5px;text-align:center;">16</div></div><div class="a" style="left:43px;top:246px;width:1546px;height:1px;background:#c9cfcb"></div><div class="a" style="left:43px;top:246.6px;width:1546px;height:65.4px;background:#737070"></div><div class="a" style="left:56px;top:246.6px;width:60px;height:48.4px;background:#f1c232"></div><div class="t" style="top:262px;line-height:21px;font-size:16.8px;color:#000;font-weight:bold;letter-spacing:0.878px;left:60.4px;-webkit-text-stroke:0.3px #000;">MENU</div><div class="a" style="left:59.3px;top:278.7px;width:53.6px;height:1.4px;background:#000"></div><div class="t" style="top:261px;line-height:23px;font-size:19.3px;color:#f8f222;font-weight:bold;letter-spacing:-0.198px;left:244.2px;-webkit-text-stroke:0.45px #f8f222;">VEÍCULO</div><div class="a" style="left:115.8px;top:371px;width:1px;height:433px;background:#e1e1e1"></div><div class="a" style="left:165.8px;top:371px;width:1px;height:433px;background:#e1e1e1"></div><div class="a" style="left:455.8px;top:371px;width:1px;height:433px;background:#e1e1e1"></div><div class="a" style="left:698.8px;top:371px;width:1px;height:433px;background:#e1e1e1"></div><div class="a" style="left:809.8px;top:371px;width:1px;height:433px;background:#e1e1e1"></div><div class="a" style="left:938.8px;top:371px;width:1px;height:433px;background:#e1e1e1"></div><div class="a" style="left:1042.8px;top:371px;width:1px;height:433px;background:#e1e1e1"></div><div class="a" style="left:1180.8px;top:371px;width:1px;height:433px;background:#e1e1e1"></div><div class="a" style="left:1313.8px;top:371px;width:1px;height:433px;background:#e1e1e1"></div><div class="a" style="left:1447.8px;top:371px;width:1px;height:433px;background:#e1e1e1"></div><div class="a" style="left:1580.8px;top:371px;width:1px;height:433px;background:#e1e1e1"></div><div class="a" style="left:116px;top:371px;width:50px;height:433px;background:#cccccc"></div><div class="a" style="left:166px;top:408px;width:1423px;height:1px;background:#e1e1e1"></div><div class="a" style="left:116px;top:408px;width:50px;height:1px;background:#d6d6d6"></div><div class="a" style="left:166px;top:446px;width:1423px;height:1px;background:#e1e1e1"></div><div class="a" style="left:116px;top:446px;width:50px;height:1px;background:#d6d6d6"></div><div class="a" style="left:166px;top:483px;width:1423px;height:1px;background:#e1e1e1"></div><div class="a" style="left:116px;top:483px;width:50px;height:1px;background:#d6d6d6"></div><div class="a" style="left:166px;top:521px;width:1423px;height:1px;background:#e1e1e1"></div><div class="a" style="left:116px;top:521px;width:50px;height:1px;background:#d6d6d6"></div><div class="a" style="left:166px;top:558px;width:1423px;height:1px;background:#e1e1e1"></div><div class="a" style="left:116px;top:558px;width:50px;height:1px;background:#d6d6d6"></div><div class="a" style="left:166px;top:596px;width:1423px;height:1px;background:#e1e1e1"></div><div class="a" style="left:116px;top:596px;width:50px;height:1px;background:#d6d6d6"></div><div class="a" style="left:166px;top:633px;width:1423px;height:1px;background:#e1e1e1"></div><div class="a" style="left:116px;top:633px;width:50px;height:1px;background:#d6d6d6"></div><div class="a" style="left:166px;top:671px;width:1423px;height:1px;background:#e1e1e1"></div><div class="a" style="left:116px;top:671px;width:50px;height:1px;background:#d6d6d6"></div><div class="a" style="left:166px;top:708px;width:1423px;height:1px;background:#e1e1e1"></div><div class="a" style="left:116px;top:708px;width:50px;height:1px;background:#d6d6d6"></div><div class="a" style="left:166px;top:746px;width:1423px;height:1px;background:#e1e1e1"></div><div class="a" style="left:116px;top:746px;width:50px;height:1px;background:#d6d6d6"></div><div class="a" style="left:166px;top:783px;width:1423px;height:1px;background:#e1e1e1"></div><div class="a" style="left:116px;top:783px;width:50px;height:1px;background:#d6d6d6"></div><div class="a" style="left:116px;top:318px;width:1465.5px;height:49px;background:#cccccc;border:1px solid #5f947a;box-shadow:inset 0 0 0 1px rgba(110,165,135,0.45)"></div><svg class="a" style="left:150.3px;top:339.6px" width="12" height="9" viewBox="0 0 12 9" stroke="#4d7560" stroke-width="1.35"><path d="M0.2 1.5H11.8M2.4 4.5H9.6M4.8 7.5H7.2"/></svg><div class="t" style="top:337px;line-height:14px;font-size:11.4px;color:#000;font-weight:bold;letter-spacing:1.604px;left:125px;-webkit-text-stroke:0.15px #000;">Nº</div><div class="a" style="left:165.8px;top:320px;width:1.5px;height:46px;background:#e3e3e3"></div><svg class="a" style="left:440.3px;top:339.6px" width="12" height="9" viewBox="0 0 12 9" stroke="#4d7560" stroke-width="1.35"><path d="M0.2 1.5H11.8M2.4 4.5H9.6M4.8 7.5H7.2"/></svg><div class="t" style="top:337px;line-height:14px;font-size:11.4px;color:#000;font-weight:bold;letter-spacing:0.332px;left:166.166px;width:273px;text-align:center;-webkit-text-stroke:0.15px #000;">Nome do Veículo</div><div class="a" style="left:455.8px;top:320px;width:1.5px;height:46px;background:#e3e3e3"></div><svg class="a" style="left:683.3px;top:339.6px" width="12" height="9" viewBox="0 0 12 9" stroke="#4d7560" stroke-width="1.35"><path d="M0.2 1.5H11.8M2.4 4.5H9.6M4.8 7.5H7.2"/></svg><div class="t" style="top:337px;line-height:14px;font-size:11.4px;color:#000;font-weight:bold;letter-spacing:0.122px;left:456.061px;width:226px;text-align:center;-webkit-text-stroke:0.15px #000;">Descrição do Veículo</div><div class="a" style="left:698.8px;top:320px;width:1.5px;height:46px;background:#e3e3e3"></div><svg class="a" style="left:794.3px;top:339.6px" width="12" height="9" viewBox="0 0 12 9" stroke="#4d7560" stroke-width="1.35"><path d="M0.2 1.5H11.8M2.4 4.5H9.6M4.8 7.5H7.2"/></svg><div class="t" style="top:329px;line-height:14px;font-size:11.4px;color:#000;font-weight:bold;letter-spacing:0.192px;left:699.096px;width:94px;text-align:center;-webkit-text-stroke:0.15px #000;">Preço de</div><div class="t" style="top:345px;line-height:14px;font-size:11.4px;color:#000;font-weight:bold;letter-spacing:0.185px;left:699.093px;width:94px;text-align:center;-webkit-text-stroke:0.15px #000;">Compra</div><div class="a" style="left:809.8px;top:320px;width:1.5px;height:46px;background:#e3e3e3"></div><svg class="a" style="left:923.3px;top:339.6px" width="12" height="9" viewBox="0 0 12 9" stroke="#4d7560" stroke-width="1.35"><path d="M0.2 1.5H11.8M2.4 4.5H9.6M4.8 7.5H7.2"/></svg><div class="t" style="top:337px;line-height:14px;font-size:11.4px;color:#000;font-weight:bold;letter-spacing:0.275px;left:810.138px;width:112px;text-align:center;-webkit-text-stroke:0.15px #000;">Data de Compra</div><div class="a" style="left:938.8px;top:320px;width:1.5px;height:46px;background:#e3e3e3"></div><svg class="a" style="left:1027.3px;top:339.6px" width="12" height="9" viewBox="0 0 12 9" stroke="#4d7560" stroke-width="1.35"><path d="M0.2 1.5H11.8M2.4 4.5H9.6M4.8 7.5H7.2"/></svg><div class="t" style="top:329px;line-height:14px;font-size:11.4px;color:#000;font-weight:bold;letter-spacing:0.220px;left:939.11px;width:87px;text-align:center;-webkit-text-stroke:0.15px #000;">Depreciação</div><div class="t" style="top:345px;line-height:14px;font-size:11.4px;color:#000;font-weight:bold;letter-spacing:0.242px;left:939.121px;width:87px;text-align:center;-webkit-text-stroke:0.15px #000;">Anual (%)</div><div class="a" style="left:1042.8px;top:320px;width:1.5px;height:46px;background:#e3e3e3"></div><svg class="a" style="left:1165.3px;top:339.6px" width="12" height="9" viewBox="0 0 12 9" stroke="#4d7560" stroke-width="1.35"><path d="M0.2 1.5H11.8M2.4 4.5H9.6M4.8 7.5H7.2"/></svg><div class="t" style="top:337px;line-height:14px;font-size:11.4px;color:#000;font-weight:bold;letter-spacing:0.254px;left:1043.13px;width:121px;text-align:center;-webkit-text-stroke:0.15px #000;">Fornecedor</div><div class="a" style="left:1180.8px;top:320px;width:1.5px;height:46px;background:#e3e3e3"></div><svg class="a" style="left:1298.3px;top:339.6px" width="12" height="9" viewBox="0 0 12 9" stroke="#4d7560" stroke-width="1.35"><path d="M0.2 1.5H11.8M2.4 4.5H9.6M4.8 7.5H7.2"/></svg><div class="t" style="top:329px;line-height:14px;font-size:11.4px;color:#000;font-weight:bold;letter-spacing:-0.005px;left:1181px;width:116px;text-align:center;-webkit-text-stroke:0.15px #000;">Preço de Locação</div><div class="t" style="top:345px;line-height:14px;font-size:11.4px;color:#000;font-weight:bold;letter-spacing:0.372px;left:1181.19px;width:116px;text-align:center;-webkit-text-stroke:0.15px #000;">por Dia</div><div class="a" style="left:1313.8px;top:320px;width:1.5px;height:46px;background:#e3e3e3"></div><svg class="a" style="left:1432.3px;top:339.6px" width="12" height="9" viewBox="0 0 12 9" stroke="#4d7560" stroke-width="1.35"><path d="M0.2 1.5H11.8M2.4 4.5H9.6M4.8 7.5H7.2"/></svg><div class="t" style="top:329px;line-height:14px;font-size:11.4px;color:#000;font-weight:bold;letter-spacing:-0.005px;left:1314px;width:117px;text-align:center;-webkit-text-stroke:0.15px #000;">Preço de Locação</div><div class="t" style="top:345px;line-height:14px;font-size:11.4px;color:#000;font-weight:bold;letter-spacing:0.305px;left:1314.15px;width:117px;text-align:center;-webkit-text-stroke:0.15px #000;">por Semana</div><div class="a" style="left:1447.8px;top:320px;width:1.5px;height:46px;background:#e3e3e3"></div><svg class="a" style="left:1565.3px;top:339.6px" width="12" height="9" viewBox="0 0 12 9" stroke="#4d7560" stroke-width="1.35"><path d="M0.2 1.5H11.8M2.4 4.5H9.6M4.8 7.5H7.2"/></svg><div class="t" style="top:329px;line-height:14px;font-size:11.4px;color:#000;font-weight:bold;letter-spacing:-0.005px;left:1448px;width:116px;text-align:center;-webkit-text-stroke:0.15px #000;">Preço de Locação</div><div class="t" style="top:345px;line-height:14px;font-size:11.4px;color:#000;font-weight:bold;letter-spacing:0.632px;left:1448.32px;width:116px;text-align:center;-webkit-text-stroke:0.15px #000;">por Mês</div><div class="a" style="left:0;top:367px;width:1589px;height:4px;background:#cdcecf"></div><div class="t" style="top:383px;line-height:14px;font-size:11.6px;color:#000;left:116.5px;width:50px;text-align:center;-webkit-text-stroke:0.2px #000;">1</div><div class="t" style="top:383px;line-height:14px;font-size:11.2px;color:#000;letter-spacing:0.326px;left:170.2px;-webkit-text-stroke:0.2px #000;">Fiat Uno 1.0 - KYZ3792</div><div class="t" style="top:383px;line-height:14px;font-size:11.2px;color:#000;letter-spacing:0.636px;left:460px;-webkit-text-stroke:0.2px #000;">Azul, Way, Modelo 2018</div><div class="t" style="top:383px;line-height:14px;font-size:11.2px;color:#000;letter-spacing:0.465px;left:702.5px;-webkit-text-stroke:0.2px #000;">R$44.150</div><div class="t" style="top:383px;line-height:14px;font-size:11.2px;color:#000;letter-spacing:1.084px;left:814px;-webkit-text-stroke:0.2px #000;">9/22/2017</div><div class="t" style="top:383px;line-height:14px;font-size:11.2px;color:#000;letter-spacing:0.509px;left:943.5px;-webkit-text-stroke:0.2px #000;">10,00%</div><div class="t" style="top:383px;line-height:14px;font-size:11.2px;color:#000;letter-spacing:0.473px;left:1185px;-webkit-text-stroke:0.2px #000;">R$50,00</div><div class="t" style="top:383px;line-height:14px;font-size:11.2px;color:#000;letter-spacing:0.465px;left:1318px;-webkit-text-stroke:0.2px #000;">R$300,00</div><div class="t" style="top:383px;line-height:14px;font-size:11.2px;color:#000;letter-spacing:0.431px;left:1451.8px;-webkit-text-stroke:0.2px #000;">R$1.200,00</div><div class="t" style="top:375px;line-height:14px;font-size:11.2px;color:#000;letter-spacing:0.546px;left:1047px;-webkit-text-stroke:0.2px #000;">Concessionária do</div><div class="t" style="top:391px;line-height:14px;font-size:11.2px;color:#000;letter-spacing:-0.053px;left:1047px;-webkit-text-stroke:0.2px #000;">Juca</div><svg class="a" style="left:1166.5px;top:388.3px" width="8" height="4.5" viewBox="0 0 8 4.5"><path d="M0 0H8L4 4.5Z" fill="#7b7b7b"/></svg><div class="t" style="top:420px;line-height:14px;font-size:11.6px;color:#000;left:116.5px;width:50px;text-align:center;-webkit-text-stroke:0.2px #000;">2</div><div class="t" style="top:420px;line-height:14px;font-size:11.2px;color:#000;letter-spacing:0.472px;left:170.2px;-webkit-text-stroke:0.2px #000;">Volkswagen Gol 1.6 - HGD4521</div><div class="t" style="top:420px;line-height:14px;font-size:11.2px;color:#000;letter-spacing:0.695px;left:460px;-webkit-text-stroke:0.2px #000;">Branco, Comfortline, Modelo 2019</div><div class="t" style="top:420px;line-height:14px;font-size:11.2px;color:#000;letter-spacing:0.465px;left:702.5px;-webkit-text-stroke:0.2px #000;">R$52.800</div><div class="t" style="top:420px;line-height:14px;font-size:11.2px;color:#000;letter-spacing:1.084px;left:814px;-webkit-text-stroke:0.2px #000;">2/10/2019</div><div class="t" style="top:420px;line-height:14px;font-size:11.2px;color:#000;letter-spacing:0.532px;left:943.5px;-webkit-text-stroke:0.2px #000;">9,00%</div><div class="t" style="top:420px;line-height:14px;font-size:11.2px;color:#000;letter-spacing:0.473px;left:1185px;-webkit-text-stroke:0.2px #000;">R$65,00</div><div class="t" style="top:420px;line-height:14px;font-size:11.2px;color:#000;letter-spacing:0.465px;left:1318px;-webkit-text-stroke:0.2px #000;">R$390,00</div><div class="t" style="top:420px;line-height:14px;font-size:11.2px;color:#000;letter-spacing:0.431px;left:1451.8px;-webkit-text-stroke:0.2px #000;">R$1.400,00</div><div class="t" style="top:420px;line-height:14px;font-size:11.2px;color:#000;letter-spacing:0.522px;left:1047px;-webkit-text-stroke:0.2px #000;">Auto Center Silva</div><svg class="a" style="left:1166.5px;top:425.8px" width="8" height="4.5" viewBox="0 0 8 4.5"><path d="M0 0H8L4 4.5Z" fill="#7b7b7b"/></svg><div class="t" style="top:458px;line-height:14px;font-size:11.6px;color:#000;left:116.5px;width:50px;text-align:center;-webkit-text-stroke:0.2px #000;">3</div><div class="t" style="top:458px;line-height:14px;font-size:11.2px;color:#000;letter-spacing:0.392px;left:170.2px;-webkit-text-stroke:0.2px #000;">Chevrolet Onix 1.0 - JKL9832</div><div class="t" style="top:458px;line-height:14px;font-size:11.2px;color:#000;letter-spacing:0.549px;left:460px;-webkit-text-stroke:0.2px #000;">Preto, LT, Modelo 2020</div><div class="t" style="top:458px;line-height:14px;font-size:11.2px;color:#000;letter-spacing:0.465px;left:702.5px;-webkit-text-stroke:0.2px #000;">R$55.200</div><div class="t" style="top:458px;line-height:14px;font-size:11.2px;color:#000;letter-spacing:1.084px;left:814px;-webkit-text-stroke:0.2px #000;">8/18/2020</div><div class="t" style="top:458px;line-height:14px;font-size:11.2px;color:#000;letter-spacing:0.532px;left:943.5px;-webkit-text-stroke:0.2px #000;">8,00%</div><div class="t" style="top:458px;line-height:14px;font-size:11.2px;color:#000;letter-spacing:0.473px;left:1185px;-webkit-text-stroke:0.2px #000;">R$70,00</div><div class="t" style="top:458px;line-height:14px;font-size:11.2px;color:#000;letter-spacing:0.465px;left:1318px;-webkit-text-stroke:0.2px #000;">R$420,00</div><div class="t" style="top:458px;line-height:14px;font-size:11.2px;color:#000;letter-spacing:0.431px;left:1451.8px;-webkit-text-stroke:0.2px #000;">R$1.600,00</div><div class="t" style="top:450px;line-height:14px;font-size:11.2px;color:#000;letter-spacing:0.460px;left:1047px;-webkit-text-stroke:0.2px #000;">Concessionária Bela</div><div class="t" style="top:466px;line-height:14px;font-size:11.2px;color:#000;letter-spacing:0.451px;left:1047px;-webkit-text-stroke:0.2px #000;">Vista</div><svg class="a" style="left:1166.5px;top:463.3px" width="8" height="4.5" viewBox="0 0 8 4.5"><path d="M0 0H8L4 4.5Z" fill="#7b7b7b"/></svg><div class="t" style="top:495px;line-height:14px;font-size:11.6px;color:#000;left:116.5px;width:50px;text-align:center;-webkit-text-stroke:0.2px #000;">4</div><div class="t" style="top:495px;line-height:14px;font-size:11.2px;color:#000;letter-spacing:0.528px;left:170.2px;-webkit-text-stroke:0.2px #000;">Renault Kwid 1.0 - LMG7214</div><div class="t" style="top:495px;line-height:14px;font-size:11.2px;color:#000;letter-spacing:0.667px;left:460px;-webkit-text-stroke:0.2px #000;">Vermelho, Zen, Modelo 2021</div><div class="t" style="top:495px;line-height:14px;font-size:11.2px;color:#000;letter-spacing:0.465px;left:702.5px;-webkit-text-stroke:0.2px #000;">R$46.500</div><div class="t" style="top:495px;line-height:14px;font-size:11.2px;color:#000;letter-spacing:1.129px;left:814px;-webkit-text-stroke:0.2px #000;">3/5/2021</div><div class="t" style="top:495px;line-height:14px;font-size:11.2px;color:#000;letter-spacing:0.532px;left:943.5px;-webkit-text-stroke:0.2px #000;">9,50%</div><div class="t" style="top:495px;line-height:14px;font-size:11.2px;color:#000;letter-spacing:0.473px;left:1185px;-webkit-text-stroke:0.2px #000;">R$55,00</div><div class="t" style="top:495px;line-height:14px;font-size:11.2px;color:#000;letter-spacing:0.465px;left:1318px;-webkit-text-stroke:0.2px #000;">R$330,00</div><div class="t" style="top:495px;line-height:14px;font-size:11.2px;color:#000;letter-spacing:0.431px;left:1451.8px;-webkit-text-stroke:0.2px #000;">R$1.250,00</div><div class="t" style="top:495px;line-height:14px;font-size:11.2px;color:#000;letter-spacing:0.709px;left:1047px;-webkit-text-stroke:0.2px #000;">Multicar Veículos</div><svg class="a" style="left:1166.5px;top:500.8px" width="8" height="4.5" viewBox="0 0 8 4.5"><path d="M0 0H8L4 4.5Z" fill="#7b7b7b"/></svg><div class="t" style="top:533px;line-height:14px;font-size:11.6px;color:#000;left:116.5px;width:50px;text-align:center;-webkit-text-stroke:0.2px #000;">5</div><div class="t" style="top:533px;line-height:14px;font-size:11.2px;color:#000;letter-spacing:0.554px;left:170.2px;-webkit-text-stroke:0.2px #000;">Toyota Corolla 2.0 - MNP6157</div><div class="t" style="top:533px;line-height:14px;font-size:11.2px;color:#000;letter-spacing:0.624px;left:460px;-webkit-text-stroke:0.2px #000;">Prata, Altis, Modelo 2019</div><div class="t" style="top:533px;line-height:14px;font-size:11.2px;color:#000;letter-spacing:0.465px;left:702.5px;-webkit-text-stroke:0.2px #000;">R$95.000</div><div class="t" style="top:533px;line-height:14px;font-size:11.2px;color:#000;letter-spacing:1.142px;left:814px;-webkit-text-stroke:0.2px #000;">11/12/2019</div><div class="t" style="top:533px;line-height:14px;font-size:11.2px;color:#000;letter-spacing:0.532px;left:943.5px;-webkit-text-stroke:0.2px #000;">7,00%</div><div class="t" style="top:533px;line-height:14px;font-size:11.2px;color:#000;letter-spacing:0.465px;left:1185px;-webkit-text-stroke:0.2px #000;">R$120,00</div><div class="t" style="top:533px;line-height:14px;font-size:11.2px;color:#000;letter-spacing:0.465px;left:1318px;-webkit-text-stroke:0.2px #000;">R$720,00</div><div class="t" style="top:533px;line-height:14px;font-size:11.2px;color:#000;letter-spacing:0.431px;left:1451.8px;-webkit-text-stroke:0.2px #000;">R$2.500,00</div><div class="t" style="top:525px;line-height:14px;font-size:11.2px;color:#000;letter-spacing:0.485px;left:1047px;-webkit-text-stroke:0.2px #000;">Concessionária</div><div class="t" style="top:541px;line-height:14px;font-size:11.2px;color:#000;letter-spacing:0.695px;left:1047px;-webkit-text-stroke:0.2px #000;">Japão Motors</div><svg class="a" style="left:1166.5px;top:538.3px" width="8" height="4.5" viewBox="0 0 8 4.5"><path d="M0 0H8L4 4.5Z" fill="#7b7b7b"/></svg><div class="t" style="top:570px;line-height:14px;font-size:11.6px;color:#000;left:116.5px;width:50px;text-align:center;-webkit-text-stroke:0.2px #000;">6</div><div class="t" style="top:570px;line-height:14px;font-size:11.2px;color:#000;letter-spacing:0.428px;left:170.2px;-webkit-text-stroke:0.2px #000;">Hyundai HB20 1.6 - PQT4432</div><div class="t" style="top:570px;line-height:14px;font-size:11.2px;color:#000;letter-spacing:0.554px;left:460px;-webkit-text-stroke:0.2px #000;">Cinza, Vision, Modelo 2020</div><div class="t" style="top:570px;line-height:14px;font-size:11.2px;color:#000;letter-spacing:0.465px;left:702.5px;-webkit-text-stroke:0.2px #000;">R$58.700</div><div class="t" style="top:570px;line-height:14px;font-size:11.2px;color:#000;letter-spacing:1.084px;left:814px;-webkit-text-stroke:0.2px #000;">7/23/2020</div><div class="t" style="top:570px;line-height:14px;font-size:11.2px;color:#000;letter-spacing:0.532px;left:943.5px;-webkit-text-stroke:0.2px #000;">8,50%</div><div class="t" style="top:570px;line-height:14px;font-size:11.2px;color:#000;letter-spacing:0.473px;left:1185px;-webkit-text-stroke:0.2px #000;">R$75,00</div><div class="t" style="top:570px;line-height:14px;font-size:11.2px;color:#000;letter-spacing:0.465px;left:1318px;-webkit-text-stroke:0.2px #000;">R$450,00</div><div class="t" style="top:570px;line-height:14px;font-size:11.2px;color:#000;letter-spacing:0.431px;left:1451.8px;-webkit-text-stroke:0.2px #000;">R$1.700,00</div><div class="t" style="top:570px;line-height:14px;font-size:11.2px;color:#000;letter-spacing:0.868px;left:1047px;-webkit-text-stroke:0.2px #000;">Auto Premium</div><svg class="a" style="left:1166.5px;top:575.8px" width="8" height="4.5" viewBox="0 0 8 4.5"><path d="M0 0H8L4 4.5Z" fill="#7b7b7b"/></svg><div class="t" style="top:608px;line-height:14px;font-size:11.6px;color:#000;left:116.5px;width:50px;text-align:center;-webkit-text-stroke:0.2px #000;">7</div><div class="t" style="top:608px;line-height:14px;font-size:11.2px;color:#000;letter-spacing:0.299px;left:170.2px;-webkit-text-stroke:0.2px #000;">Honda Civic 2.0 - RST2298</div><div class="t" style="top:608px;line-height:14px;font-size:11.2px;color:#000;letter-spacing:0.640px;left:460px;-webkit-text-stroke:0.2px #000;">Branco, Touring, Modelo 2021</div><div class="t" style="top:608px;line-height:14px;font-size:11.2px;color:#000;letter-spacing:0.452px;left:702.5px;-webkit-text-stroke:0.2px #000;">R$118.000</div><div class="t" style="top:608px;line-height:14px;font-size:11.2px;color:#000;letter-spacing:1.129px;left:814px;-webkit-text-stroke:0.2px #000;">6/2/2021</div><div class="t" style="top:608px;line-height:14px;font-size:11.2px;color:#000;letter-spacing:0.532px;left:943.5px;-webkit-text-stroke:0.2px #000;">6,50%</div><div class="t" style="top:608px;line-height:14px;font-size:11.2px;color:#000;letter-spacing:0.465px;left:1185px;-webkit-text-stroke:0.2px #000;">R$150,00</div><div class="t" style="top:608px;line-height:14px;font-size:11.2px;color:#000;letter-spacing:0.465px;left:1318px;-webkit-text-stroke:0.2px #000;">R$900,00</div><div class="t" style="top:608px;line-height:14px;font-size:11.2px;color:#000;letter-spacing:0.431px;left:1451.8px;-webkit-text-stroke:0.2px #000;">R$3.200,00</div><div class="t" style="top:600px;line-height:14px;font-size:11.2px;color:#000;letter-spacing:0.485px;left:1047px;-webkit-text-stroke:0.2px #000;">Concessionária</div><div class="t" style="top:616px;line-height:14px;font-size:11.2px;color:#000;letter-spacing:0.738px;left:1047px;-webkit-text-stroke:0.2px #000;">Honda Way</div><svg class="a" style="left:1166.5px;top:613.3px" width="8" height="4.5" viewBox="0 0 8 4.5"><path d="M0 0H8L4 4.5Z" fill="#7b7b7b"/></svg><div class="t" style="top:645px;line-height:14px;font-size:11.6px;color:#000;left:116.5px;width:50px;text-align:center;-webkit-text-stroke:0.2px #000;">8</div><div class="t" style="top:645px;line-height:14px;font-size:11.2px;color:#000;letter-spacing:0.432px;left:170.2px;-webkit-text-stroke:0.2px #000;">Jeep Renegade 1.8 - UVW6543</div><div class="t" style="top:645px;line-height:14px;font-size:11.2px;color:#000;letter-spacing:0.677px;left:460px;-webkit-text-stroke:0.2px #000;">Verde, Sport, Modelo 2020</div><div class="t" style="top:645px;line-height:14px;font-size:11.2px;color:#000;letter-spacing:0.465px;left:702.5px;-webkit-text-stroke:0.2px #000;">R$89.900</div><div class="t" style="top:645px;line-height:14px;font-size:11.2px;color:#000;letter-spacing:1.084px;left:814px;-webkit-text-stroke:0.2px #000;">9/19/2020</div><div class="t" style="top:645px;line-height:14px;font-size:11.2px;color:#000;letter-spacing:0.532px;left:943.5px;-webkit-text-stroke:0.2px #000;">7,50%</div><div class="t" style="top:645px;line-height:14px;font-size:11.2px;color:#000;letter-spacing:0.457px;left:1185px;-webkit-text-stroke:0.2px #000;">R$110,00</div><div class="t" style="top:645px;line-height:14px;font-size:11.2px;color:#000;letter-spacing:0.465px;left:1318px;-webkit-text-stroke:0.2px #000;">R$660,00</div><div class="t" style="top:645px;line-height:14px;font-size:11.2px;color:#000;letter-spacing:0.431px;left:1451.8px;-webkit-text-stroke:0.2px #000;">R$2.400,00</div><div class="t" style="top:637px;line-height:14px;font-size:11.2px;color:#000;letter-spacing:0.485px;left:1047px;-webkit-text-stroke:0.2px #000;">Concessionária</div><div class="t" style="top:654px;line-height:14px;font-size:11.2px;color:#000;letter-spacing:0.636px;left:1047px;-webkit-text-stroke:0.2px #000;">AutoJardins</div><svg class="a" style="left:1166.5px;top:650.8px" width="8" height="4.5" viewBox="0 0 8 4.5"><path d="M0 0H8L4 4.5Z" fill="#7b7b7b"/></svg><div class="t" style="top:683px;line-height:14px;font-size:11.6px;color:#000;left:116.5px;width:50px;text-align:center;-webkit-text-stroke:0.2px #000;">9</div><div class="t" style="top:683px;line-height:14px;font-size:11.2px;color:#000;letter-spacing:0.248px;left:170.2px;-webkit-text-stroke:0.2px #000;">Ford Ka 1.0 - XCD8734</div><div class="t" style="top:683px;line-height:14px;font-size:11.2px;color:#000;letter-spacing:0.453px;left:460px;-webkit-text-stroke:0.2px #000;">Azul, SE, Modelo 2018</div><div class="t" style="top:683px;line-height:14px;font-size:11.2px;color:#000;letter-spacing:0.465px;left:702.5px;-webkit-text-stroke:0.2px #000;">R$42.600</div><div class="t" style="top:683px;line-height:14px;font-size:11.2px;color:#000;letter-spacing:1.084px;left:814px;-webkit-text-stroke:0.2px #000;">5/29/2018</div><div class="t" style="top:683px;line-height:14px;font-size:11.2px;color:#000;letter-spacing:0.509px;left:943.5px;-webkit-text-stroke:0.2px #000;">10,00%</div><div class="t" style="top:683px;line-height:14px;font-size:11.2px;color:#000;letter-spacing:0.598px;left:1185px;-webkit-text-stroke:0.2px #000;">R$48</div><div class="t" style="top:683px;line-height:14px;font-size:11.2px;color:#000;letter-spacing:0.553px;left:1318px;-webkit-text-stroke:0.2px #000;">R$290</div><div class="t" style="top:683px;line-height:14px;font-size:11.2px;color:#000;letter-spacing:0.473px;left:1451.8px;-webkit-text-stroke:0.2px #000;">R$1.150</div><div class="t" style="top:683px;line-height:14px;font-size:11.2px;color:#000;letter-spacing:0.706px;left:1047px;-webkit-text-stroke:0.2px #000;">AutoMix Veículos</div><svg class="a" style="left:1166.5px;top:688.3px" width="8" height="4.5" viewBox="0 0 8 4.5"><path d="M0 0H8L4 4.5Z" fill="#7b7b7b"/></svg><div class="t" style="top:720px;line-height:14px;font-size:11.6px;color:#000;letter-spacing:0.667px;left:116.834px;width:50px;text-align:center;-webkit-text-stroke:0.2px #000;">10</div><div class="t" style="top:720px;line-height:14px;font-size:11.2px;color:#000;letter-spacing:0.236px;left:170.2px;-webkit-text-stroke:0.2px #000;">Nissan Kicks 1.6 - YHJ2093</div><div class="t" style="top:720px;line-height:14px;font-size:11.2px;color:#000;letter-spacing:0.470px;left:460px;-webkit-text-stroke:0.2px #000;">Branco Pérola, SL, Modelo 2021</div><div class="t" style="top:720px;line-height:14px;font-size:11.2px;color:#000;letter-spacing:0.465px;left:702.5px;-webkit-text-stroke:0.2px #000;">R$96.400</div><div class="t" style="top:720px;line-height:14px;font-size:11.2px;color:#000;letter-spacing:1.188px;left:814px;-webkit-text-stroke:0.2px #000;">1/11/2021</div><div class="t" style="top:720px;line-height:14px;font-size:11.2px;color:#000;letter-spacing:0.532px;left:943.5px;-webkit-text-stroke:0.2px #000;">7,20%</div><div class="t" style="top:720px;line-height:14px;font-size:11.2px;color:#000;letter-spacing:0.553px;left:1185px;-webkit-text-stroke:0.2px #000;">R$125</div><div class="t" style="top:720px;line-height:14px;font-size:11.2px;color:#000;letter-spacing:0.553px;left:1318px;-webkit-text-stroke:0.2px #000;">R$750</div><div class="t" style="top:720px;line-height:14px;font-size:11.2px;color:#000;letter-spacing:0.473px;left:1451.8px;-webkit-text-stroke:0.2px #000;">R$2.600</div><div class="t" style="top:712px;line-height:14px;font-size:11.2px;color:#000;letter-spacing:0.485px;left:1047px;-webkit-text-stroke:0.2px #000;">Concessionária</div><div class="t" style="top:729px;line-height:14px;font-size:11.2px;color:#000;letter-spacing:0.251px;left:1047px;-webkit-text-stroke:0.2px #000;">Shizen</div><svg class="a" style="left:1166.5px;top:725.8px" width="8" height="4.5" viewBox="0 0 8 4.5"><path d="M0 0H8L4 4.5Z" fill="#7b7b7b"/></svg><div class="t" style="top:758px;line-height:14px;font-size:11.6px;color:#000;letter-spacing:0.623px;left:116.811px;width:50px;text-align:center;-webkit-text-stroke:0.2px #000;">11</div><div class="t" style="top:758px;line-height:14px;font-size:11.2px;color:#000;letter-spacing:0.402px;left:170.2px;-webkit-text-stroke:0.2px #000;">Peugeot 208 1.2 - ZTR5542</div><div class="t" style="top:758px;line-height:14px;font-size:11.2px;color:#000;letter-spacing:0.613px;left:460px;-webkit-text-stroke:0.2px #000;">Laranja, Active, Modelo 2022</div><div class="t" style="top:758px;line-height:14px;font-size:11.2px;color:#000;letter-spacing:0.465px;left:702.5px;-webkit-text-stroke:0.2px #000;">R$74.500</div><div class="t" style="top:758px;line-height:14px;font-size:11.2px;color:#000;letter-spacing:1.129px;left:814px;-webkit-text-stroke:0.2px #000;">4/4/2022</div><div class="t" style="top:758px;line-height:14px;font-size:11.2px;color:#000;letter-spacing:0.532px;left:943.5px;-webkit-text-stroke:0.2px #000;">8,00%</div><div class="t" style="top:758px;line-height:14px;font-size:11.2px;color:#000;letter-spacing:0.598px;left:1185px;-webkit-text-stroke:0.2px #000;">R$85</div><div class="t" style="top:758px;line-height:14px;font-size:11.2px;color:#000;letter-spacing:0.553px;left:1318px;-webkit-text-stroke:0.2px #000;">R$510</div><div class="t" style="top:758px;line-height:14px;font-size:11.2px;color:#000;letter-spacing:0.473px;left:1451.8px;-webkit-text-stroke:0.2px #000;">R$1.900</div><div class="t" style="top:758px;line-height:14px;font-size:11.2px;color:#000;letter-spacing:0.666px;left:1047px;-webkit-text-stroke:0.2px #000;">Multicar França</div><svg class="a" style="left:1166.5px;top:763.3px" width="8" height="4.5" viewBox="0 0 8 4.5"><path d="M0 0H8L4 4.5Z" fill="#7b7b7b"/></svg><div class="a" style="left:116px;top:790px;width:50px;height:14px;overflow:hidden"><div class="t" style="top:5px;line-height:14px;font-size:11.6px;color:#000;letter-spacing:0.667px;left:0.833691px;width:50px;text-align:center;-webkit-text-stroke:0.2px #000;">12</div></div><svg class="a" style="left:1166.5px;top:800.5px" width="8" height="3.5" viewBox="0 0 8 3.5"><path d="M0 0H8L4.9 3.5H3.1Z" fill="#7b7b7b"/></svg><svg class="a" style="left:1305px;top:440px" width="155" height="55" viewBox="1305 440 155 55"><rect x="1314.3" y="445.9" width="133.1" height="36.5" fill="none" stroke="#2d62c6" stroke-width="1.8"/><circle cx="1448" cy="483.6" r="4.9" fill="#fff"/><circle cx="1448" cy="483.6" r="3.9" fill="#1257cf"/></svg><div class="a" style="left:1589px;top:224px;width:11px;height:592px;background:#fafafa;border-left:1px solid #e3e3e3"></div><div class="a" style="left:1591px;top:373px;width:7.5px;height:23px;border-radius:4px;background:#d4d6d8"></div><svg class="a" style="left:1590px;top:776px" width="10" height="28" viewBox="0 0 10 28" fill="#80868b"><path d="M2.5 7.5L5 4.7L7.5 7.5ZM2.5 20L5 22.8L7.5 20Z"/></svg><div class="a" style="left:1589px;top:775px;width:11px;height:1px;background:#e3e3e3"></div><div class="a" style="left:1589px;top:789.5px;width:11px;height:1px;background:#e3e3e3"></div><div class="a" style="left:0;top:804px;width:1600px;height:12px;background:#fafafa;border-top:1px solid #e3e3e3"></div><div class="a" style="left:0;top:804px;width:43px;height:12px;background:#f8f9fa;border-right:1px solid #d5d5d5;border-top:1px solid #d9d9d9"></div><div class="a" style="left:46px;top:806px;width:825px;height:8px;border-radius:4px;background:#d4d6d8"></div><svg class="a" style="left:1561px;top:805px" width="28" height="10" viewBox="0 0 28 10" fill="#80868b"><path d="M8.3 2.5L5.6 5L8.3 7.5ZM20 2.5L22.7 5L20 7.5Z"/><path d="M0.5 0V10M14.2 0V10" stroke="#e3e3e3" fill="none"/></svg><div class="a" style="left:0;top:816px;width:1600px;height:34px;background:#f9fbfd;border-top:1px solid #e3e6ea"></div><svg class="a" style="left:48.5px;top:825.5px" width="17" height="17" viewBox="0 0 24 24" fill="#444746"><path d="M19 13h-6v6h-2v-6H5v-2h6V5h2v6h6v2z"/></svg><svg class="a" style="left:85.5px;top:825.5px" width="17" height="17" viewBox="0 0 24 24" fill="#444746"><path d="M3 18h18v-2H3v2zm0-5h18v-2H3v2zm0-7v2h18V6H3z"/></svg><div class="a" style="left:116.5px;top:825px;width:1px;height:20px;background:#c7c7c7"></div><div class="a" style="left:117.5px;top:817px;width:80.5px;height:33px;background:#fff"></div><div class="a" style="left:119px;top:846.5px;width:79px;height:3.5px;background:#4baf50"></div><div class="a" style="left:198px;top:817px;width:78px;height:33px;background:#e1e9f7"></div><div class="t" style="top:826px;line-height:17px;font-size:13.4px;color:#444746;letter-spacing:-0.318px;left:130.5px;-webkit-text-stroke:0.25px #444746;">MENU</div><svg class="a" style="left:174px;top:825px" width="19" height="19" viewBox="0 0 24 24" fill="#444746"><path d="M7 10l5 5 5-5z"/></svg><div class="t" style="top:826px;line-height:17px;font-size:13.2px;color:#1b55b3;font-weight:bold;letter-spacing:0.210px;left:210px;">Equip</div><svg class="a" style="left:251.5px;top:825px" width="19" height="19" viewBox="0 0 24 24" fill="#1b55b3"><path d="M7 10l5 5 5-5z"/></svg><div class="t" style="top:826px;line-height:17px;font-size:13.4px;color:#444746;letter-spacing:0.450px;left:287.5px;-webkit-text-stroke:0.25px #444746;">For</div><svg class="a" style="left:313px;top:825px" width="19" height="19" viewBox="0 0 24 24" fill="#444746"><path d="M7 10l5 5 5-5z"/></svg><div class="t" style="top:826px;line-height:17px;font-size:13.4px;color:#444746;letter-spacing:0.684px;left:349.5px;-webkit-text-stroke:0.25px #444746;">Cli</div><svg class="a" style="left:371px;top:825px" width="19" height="19" viewBox="0 0 24 24" fill="#444746"><path d="M7 10l5 5 5-5z"/></svg><div class="t" style="top:826px;line-height:17px;font-size:13.4px;color:#444746;letter-spacing:0.488px;left:407.5px;-webkit-text-stroke:0.25px #444746;">Despesas</div><svg class="a" style="left:474.5px;top:825px" width="19" height="19" viewBox="0 0 24 24" fill="#444746"><path d="M7 10l5 5 5-5z"/></svg><div class="t" style="top:826px;line-height:17px;font-size:13.4px;color:#444746;letter-spacing:0.448px;left:512px;-webkit-text-stroke:0.25px #444746;">Jan</div><svg class="a" style="left:539px;top:825px" width="19" height="19" viewBox="0 0 24 24" fill="#444746"><path d="M7 10l5 5 5-5z"/></svg><div class="t" style="top:826px;line-height:17px;font-size:13.4px;color:#444746;letter-spacing:-0.169px;left:576px;-webkit-text-stroke:0.25px #444746;">Fev</div><svg class="a" style="left:602.5px;top:825px" width="19" height="19" viewBox="0 0 24 24" fill="#444746"><path d="M7 10l5 5 5-5z"/></svg><div class="t" style="top:826px;line-height:17px;font-size:13.4px;color:#444746;letter-spacing:0.711px;left:639.5px;-webkit-text-stroke:0.25px #444746;">Mar</div><svg class="a" style="left:668.5px;top:825px" width="19" height="19" viewBox="0 0 24 24" fill="#444746"><path d="M7 10l5 5 5-5z"/></svg><div class="t" style="top:826px;line-height:17px;font-size:13.4px;color:#444746;letter-spacing:0.824px;left:705.5px;-webkit-text-stroke:0.25px #444746;">Abr</div><svg class="a" style="left:732.5px;top:825px" width="19" height="19" viewBox="0 0 24 24" fill="#444746"><path d="M7 10l5 5 5-5z"/></svg><div class="t" style="top:826px;line-height:17px;font-size:13.4px;color:#444746;letter-spacing:0.704px;left:769.5px;-webkit-text-stroke:0.25px #444746;">Mai</div><svg class="a" style="left:797px;top:825px" width="19" height="19" viewBox="0 0 24 24" fill="#444746"><path d="M7 10l5 5 5-5z"/></svg><div class="t" style="top:826px;line-height:17px;font-size:13.4px;color:#444746;letter-spacing:0.448px;left:834px;-webkit-text-stroke:0.25px #444746;">Jun</div><svg class="a" style="left:861px;top:825px" width="19" height="19" viewBox="0 0 24 24" fill="#444746"><path d="M7 10l5 5 5-5z"/></svg><div class="t" style="top:826px;line-height:17px;font-size:13.4px;color:#444746;letter-spacing:0.935px;left:898px;-webkit-text-stroke:0.25px #444746;">Jul</div><svg class="a" style="left:921.5px;top:825px" width="19" height="19" viewBox="0 0 24 24" fill="#444746"><path d="M7 10l5 5 5-5z"/></svg><div class="t" style="top:826px;line-height:17px;font-size:13.4px;color:#444746;letter-spacing:0.329px;left:958.5px;-webkit-text-stroke:0.25px #444746;">Ago</div><svg class="a" style="left:987.5px;top:825px" width="19" height="19" viewBox="0 0 24 24" fill="#444746"><path d="M7 10l5 5 5-5z"/></svg><div class="t" style="top:826px;line-height:17px;font-size:13.4px;color:#444746;letter-spacing:0.443px;left:1024.5px;-webkit-text-stroke:0.25px #444746;">Set</div><svg class="a" style="left:1050px;top:825px" width="19" height="19" viewBox="0 0 24 24" fill="#444746"><path d="M7 10l5 5 5-5z"/></svg><div class="t" style="top:826px;line-height:17px;font-size:13.4px;color:#444746;letter-spacing:1.201px;left:1087.5px;-webkit-text-stroke:0.25px #444746;">Out</div><svg class="a" style="left:1115.5px;top:825px" width="19" height="19" viewBox="0 0 24 24" fill="#444746"><path d="M7 10l5 5 5-5z"/></svg><div class="t" style="top:826px;line-height:17px;font-size:13.4px;color:#444746;letter-spacing:0.335px;left:1152.5px;-webkit-text-stroke:0.25px #444746;">Nov</div><svg class="a" style="left:1181.5px;top:825px" width="19" height="19" viewBox="0 0 24 24" fill="#444746"><path d="M7 10l5 5 5-5z"/></svg><div class="t" style="top:826px;line-height:17px;font-size:13.4px;color:#444746;letter-spacing:-0.165px;left:1218.5px;-webkit-text-stroke:0.25px #444746;">Dez</div><svg class="a" style="left:1246.5px;top:825px" width="19" height="19" viewBox="0 0 24 24" fill="#444746"><path d="M7 10l5 5 5-5z"/></svg><div class="t" style="top:826px;line-height:17px;font-size:13.4px;color:#444746;letter-spacing:0.146px;left:1284px;-webkit-text-stroke:0.25px #444746;">Rel_Equip</div><svg class="a" style="left:1351.5px;top:825px" width="19" height="19" viewBox="0 0 24 24" fill="#444746"><path d="M7 10l5 5 5-5z"/></svg><div class="a" style="left:1382px;top:825px;width:1px;height:20px;background:#c7c7c7"></div><svg class="a" style="left:1396px;top:826px" width="16" height="16" viewBox="0 0 24 24" fill="#444746"><path d="M15.41 7.41L14 6l-6 6 6 6 1.41-1.41L10.83 12z"/></svg><svg class="a" style="left:1433px;top:826px" width="16" height="16" viewBox="0 0 24 24" fill="#444746"><path d="M10 6L8.59 7.41 13.17 12l-4.58 4.59L10 18l6-6z"/></svg><svg class="a" style="left:1565px;top:827px" width="18" height="18" viewBox="0 0 24 24" fill="#444746"><path d="M15.41 7.41L14 6l-6 6 6 6 1.41-1.41L10.83 12z"/></svg></body></html>
